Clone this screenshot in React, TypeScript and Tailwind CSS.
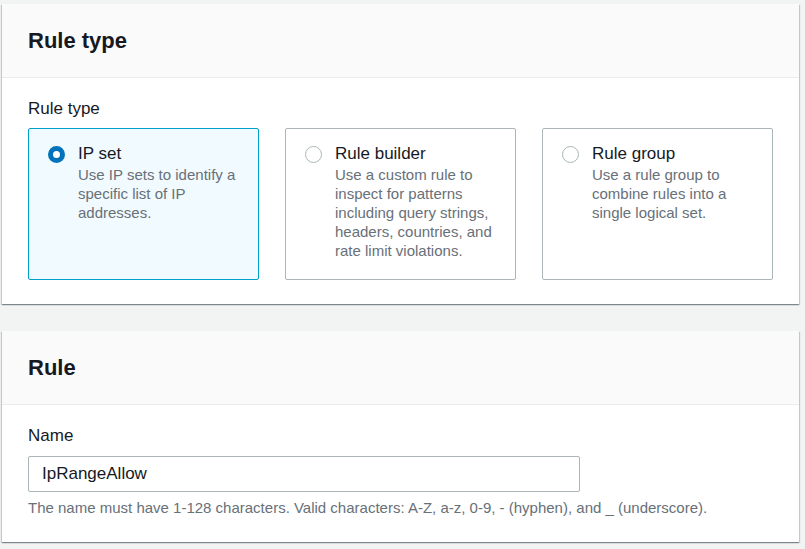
import * as React from "react";

const font = { fontFamily: '"Liberation Sans", Arial, sans-serif' };

type Option = { id: string; title: string; lines: string[] };

const options: Option[] = [
  {
    id: "ipset",
    title: "IP set",
    lines: ["Use IP sets to identify a", "specific list of IP", "addresses."],
  },
  {
    id: "builder",
    title: "Rule builder",
    lines: [
      "Use a custom rule to",
      "inspect for patterns",
      "including query strings,",
      "headers, countries, and",
      "rate limit violations.",
    ],
  },
  {
    id: "group",
    title: "Rule group",
    lines: ["Use a rule group to", "combine rules into a", "single logical set."],
  },
];

function Radio({ checked }: { checked: boolean }) {
  return checked ? (
    <span className="mt-[3px] block h-[17px] w-[17px] shrink-0 rounded-full border-[5px] border-[#0073bb] bg-white" />
  ) : (
    <span className="mt-[3px] block h-[17px] w-[17px] shrink-0 rounded-full border-[1.5px] border-[#aab7b8] bg-white" />
  );
}

function Tile({ option, checked }: { option: Option; checked: boolean }) {
  return (
    <div
      className={
        checked
          ? "flex h-[152px] gap-[13px] rounded-[2px] border border-[#00a1c9] bg-[#f1faff] pl-[19px] pr-[12px] pt-[14px]"
          : "flex h-[152px] gap-[13px] rounded-[2px] border border-[#aab7b8] bg-white pl-[19px] pr-[12px] pt-[14px]"
      }
    >
      <Radio checked={checked} />
      <div>
        <div className="text-[17px] leading-[22px] text-[#16191f]">{option.title}</div>
        <div className="text-[15px] leading-[19px] text-[#687078]">
          {option.lines.map((l) => (
            <div key={l}>{l}</div>
          ))}
        </div>
      </div>
    </div>
  );
}

function Card({ title, children }: { title: string; children: React.ReactNode }) {
  return (
    <div className="w-[797px] bg-white shadow-[0_1px_1px_0_rgba(0,28,36,0.3),1px_1px_1px_0_rgba(0,28,36,0.15),-1px_1px_1px_0_rgba(0,28,36,0.15)]">
      <div className="flex h-[74px] items-center border-b border-[#eaeded] bg-[#fafafa] px-[26px]">
        <h2 className="text-[22px] font-bold leading-[28px] text-[#16191f]">{title}</h2>
      </div>
      {children}
    </div>
  );
}

export default function App() {
  return (
    <div className="min-h-[549px] w-[805px] bg-[#f2f3f3] pl-[2px] pt-[4px]" style={font}>
      <div className="flex flex-col gap-[27px]">
        <Card title="Rule type">
          <div className="px-[26px] pb-[24px] pt-[20px]">
            <div className="text-[17px] leading-[22px] text-[#16191f]">Rule type</div>
            <div className="mt-[8px] grid grid-cols-3 gap-[26px]">
              {options.map((o) => (
                <Tile key={o.id} option={o} checked={o.id === "ipset"} />
              ))}
            </div>
          </div>
        </Card>
        <Card title="Rule">
          <div className="px-[26px] pb-[24px] pt-[20px]">
            <div className="text-[17px] leading-[22px] text-[#16191f]">Name</div>
            <div className="mt-[9px] flex h-[36px] w-[552px] items-center rounded-[2px] border border-[#aab7b8] bg-white px-[13px] text-[17px] text-[#16191f]">
              IpRangeAllow
            </div>
            <div className="mt-[6px] text-[15px] leading-[20px] text-[#687078]">
              The name must have 1-128 characters. Valid characters: A-Z, a-z, 0-9, - (hyphen), and _ (underscore).
            </div>
          </div>
        </Card>
      </div>
    </div>
  );
}
